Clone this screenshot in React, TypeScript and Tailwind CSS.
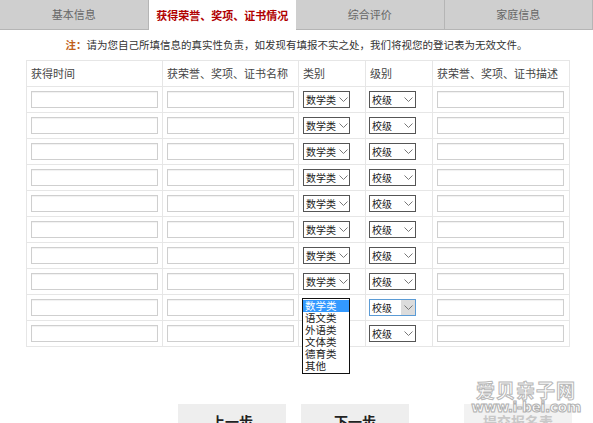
import React from "react";

const FONT = '"Microsoft YaHei", "Noto Sans CJK SC", "Noto Sans", sans-serif';

function Chevron() {
  return (
    <svg width="9" height="5" viewBox="0 0 9 5" className="shrink-0">
      <path d="M0.5 0.5 L4.5 4.5 L8.5 0.5" fill="none" stroke="#777" strokeWidth="1" />
    </svg>
  );
}

function FakeSelect({ label, focused, children }: { label: string; focused?: boolean; children?: React.ReactNode }) {
  return (
    <div
      className={
        "relative flex h-[17px] w-[47px] items-center justify-between whitespace-nowrap border bg-white pl-[2px] text-[10px] leading-none text-[#222] " +
        (focused ? "border-[#5b9bd5]" : "border-[#555]")
      }
    >
      <span className="whitespace-nowrap">{label}</span>
      <span
        className={
          "flex h-full w-[14px] shrink-0 items-center justify-center " + (focused ? "bg-[#dcdcdc]" : "")
        }
      >
        <Chevron />
      </span>
      {children}
    </div>
  );
}

function TextInput({ w }: { w: string }) {
  return <div className={"h-[17px] border border-[#cfcfcf] bg-white shadow-[inset_0_1px_1px_rgba(0,0,0,0.06)] " + w} />;
}

const options = ["数学类", "语文类", "外语类", "文体类", "德育类", "其他"];

export default function App() {
  const rows = Array.from({ length: 10 }, (_, i) => i);
  const tabs = ["基本信息", "获得荣誉、奖项、证书情况", "综合评价", "家庭信息"];
  return (
    <div className="relative h-[423px] w-[593px] overflow-hidden bg-white" style={{ fontFamily: FONT }}>
      {/* Tabs */}
      <div className="flex h-[30px]">
        {tabs.map((t, i) => (
          <div
            key={t}
            className={
              "flex flex-1 items-center justify-center text-[11px] " +
              (i === 1
                ? "bg-white font-bold text-[#b00000]"
                : "border-r border-b border-[#b5b5b5] bg-[#cfcfcf] text-[#666]")
            }
          >
            {t}
          </div>
        ))}
      </div>

      {/* Notice */}
      <div className="mt-[6px] text-center text-[10.5px] leading-[18px] text-[#333]">
        <span className="font-bold text-[#c0601a]">注：</span>
        请为您自己所填信息的真实性负责，如发现有填报不实之处，我们将视您的登记表为无效文件。
      </div>

      {/* Table */}
      <div className="ml-[26px] mt-[6px] w-[543px]">
        <table className="w-full table-fixed border-collapse text-[11px] text-[#444]">
          <colgroup>
            <col className="w-[136px]" />
            <col className="w-[136px]" />
            <col className="w-[67px]" />
            <col className="w-[67px]" />
            <col className="w-[137px]" />
          </colgroup>
          <thead>
            <tr className="h-[26px]">
              {["获得时间", "获荣誉、奖项、证书名称", "类别", "级别", "获荣誉、奖项、证书描述"].map((h) => (
                <th key={h} className="border border-[#e6e6e6] pl-[4px] text-left font-normal">
                  {h}
                </th>
              ))}
            </tr>
          </thead>
          <tbody>
            {rows.map((r) => (
              <tr key={r} className="h-[26px]">
                <td className="border border-[#e6e6e6] pl-[4px]">
                  <TextInput w="w-[127px]" />
                </td>
                <td className="border border-[#e6e6e6] pl-[4px]">
                  <TextInput w="w-[127px]" />
                </td>
                <td className="border border-[#e6e6e6] pl-[4px]">
                  <FakeSelect label="数学类">
                    {r === 8 && (
                      <div className="absolute left-[-2px] top-[-2px] z-10 w-[48px] border border-[#111] bg-white py-px text-[10.5px] leading-[12px] text-[#222]">
                        {options.map((o, k) => (
                          <div key={o} className={"whitespace-nowrap pl-[2px] " + (k === 0 ? "bg-[#3399ff] text-white" : "")}>
                            {o}
                          </div>
                        ))}
                      </div>
                    )}
                  </FakeSelect>
                </td>
                <td className="border border-[#e6e6e6] pl-[3px]">
                  <FakeSelect label="校级" focused={r === 8} />
                </td>
                <td className="border border-[#e6e6e6] pl-[4px]">
                  <TextInput w="w-[127px]" />
                </td>
              </tr>
            ))}
          </tbody>
        </table>
      </div>

      {/* Buttons */}
      <div className="ml-[178px] mt-[57px] flex">
        <button className="h-[32px] w-[108px] whitespace-nowrap bg-[#eeeeee] pt-[2px] text-[14px] font-bold leading-[20px] text-[#222]">上一步</button>
        <button className="ml-[15px] h-[32px] w-[108px] whitespace-nowrap bg-[#eeeeee] pt-[2px] text-[14px] font-bold leading-[20px] text-[#222]">下一步</button>
        <button className="ml-[55px] h-[32px] w-[108px] whitespace-nowrap bg-[#f2f2f2] pt-[2px] text-[14px] font-bold leading-[20px] text-[#c8c8c8]">提交报名表</button>
      </div>

      {/* Watermark */}
      <div className="pointer-events-none absolute left-[476px] top-[380px] flex w-[100px] flex-col items-center leading-none">
        <div className="whitespace-nowrap text-[19px] font-bold tracking-[1px] text-white [-webkit-text-stroke:1px_#b8b8b8]">爱贝亲子网</div>
        <div className="mt-[1px] whitespace-nowrap text-[14px] font-bold tracking-[-0.5px] text-white [-webkit-text-stroke:1px_#b0b0b0]" style={{ fontFamily: '"DejaVu Sans", sans-serif' }}>
          www.i-bei.com
        </div>
      </div>
    </div>
  );
}
